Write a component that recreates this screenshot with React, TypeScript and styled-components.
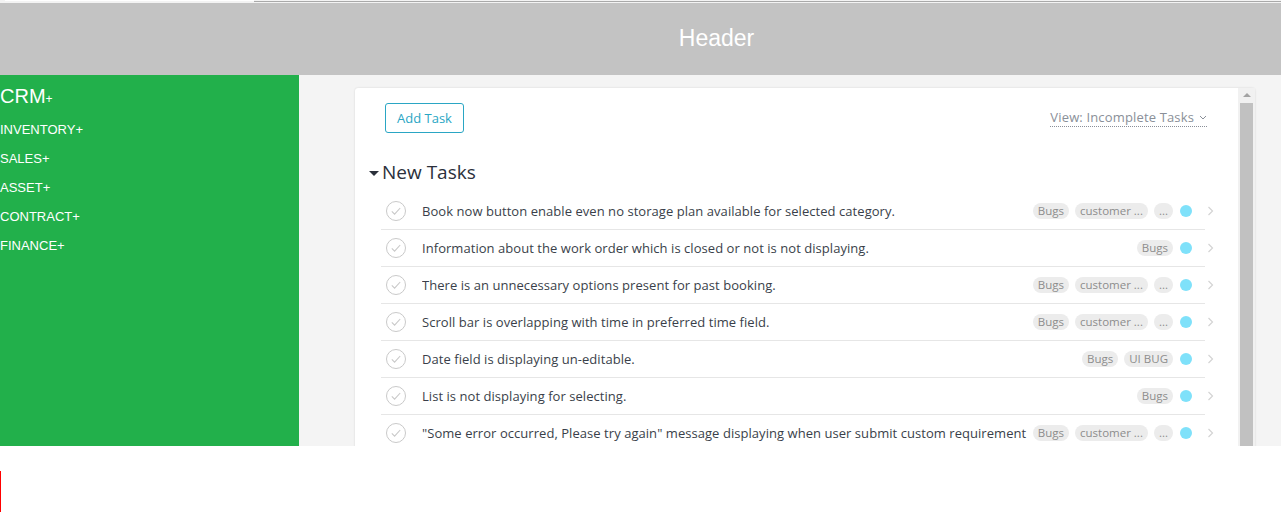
import React from "react";
import styled, { createGlobalStyle } from "styled-components";

const GlobalStyle = createGlobalStyle`
  body {
    margin: 0;
    background: #ffffff;
    font-family: "Open Sans", "Liberation Sans", sans-serif;
  }
`;

type Task = { title: string; tags: string[] };

const tasks: Task[] = [
  { title: "Book now button enable even no storage plan available for selected category.", tags: ["Bugs", "customer ...", "..."] },
  { title: "Information about the work order which is closed or not is not displaying.", tags: ["Bugs"] },
  { title: "There is an unnecessary options present for past booking.", tags: ["Bugs", "customer ...", "..."] },
  { title: "Scroll bar is overlapping with time in preferred time field.", tags: ["Bugs", "customer ...", "..."] },
  { title: "Date field is displaying un-editable.", tags: ["Bugs", "UI BUG"] },
  { title: "List is not displaying for selecting.", tags: ["Bugs"] },
  { title: "\"Some error occurred, Please try again\" message displaying when user submit custom requirement", tags: ["Bugs", "customer ...", "..."] },
];

const menu = ["INVENTORY", "SALES", "ASSET", "CONTRACT", "FINANCE"];

const CheckCircle = () => (
  <svg width="20" height="20" viewBox="0 0 20 20">
    <circle cx="10" cy="10" r="9.5" fill="none" stroke="#c9c9c9" strokeWidth="1" />
    <path d="M5.8 10.4l2.8 2.8 5.6-6.2" fill="none" stroke="#c9c9c9" strokeWidth="1.1" />
  </svg>
);

const Chevron = () => (
  <svg width="7" height="10" viewBox="0 0 7 10">
    <path d="M1.5 1l4 4-4 4" fill="none" stroke="#d4d4d4" strokeWidth="1.2" />
  </svg>
);

const App = () => {
  return (
    <>
      <GlobalStyle />
      <TopStrip>
        <StripLight />
        <StripDark />
      </TopStrip>
      <Header>Header</Header>
      <Layout>
        <Sidebar>
          <Brand>
            CRM<small>+</small>
          </Brand>
          {menu.map((m) => (
            <MenuItem key={m}>
              {m}
              <span>+</span>
            </MenuItem>
          ))}
        </Sidebar>
        <Main>
          <Card>
            <CardBody>
              <Toolbar>
                <AddButton>Add Task</AddButton>
                <ViewLink>
                  View: Incomplete Tasks
                  <svg width="8" height="5" viewBox="0 0 8 5">
                    <path d="M1 1l3 3 3-3" fill="none" stroke="#8a8f98" strokeWidth="1" />
                  </svg>
                </ViewLink>
              </Toolbar>
              <SectionTitle>
                <Caret />
                New Tasks
              </SectionTitle>
              <TaskList>
                {tasks.map((t, i) => (
                  <TaskRow key={i}>
                    <CheckCircle />
                    <TaskTitle>{t.title}</TaskTitle>
                    <Tags>
                      {t.tags.map((tag, j) => (
                        <Tag key={j}>{tag}</Tag>
                      ))}
                      <Dot />
                    </Tags>
                    <ChevronBox>
                      <Chevron />
                    </ChevronBox>
                  </TaskRow>
                ))}
              </TaskList>
            </CardBody>
            <ScrollBar>
              <ScrollArrow />
              <ScrollThumb />
            </ScrollBar>
          </Card>
        </Main>
      </Layout>
      <Footer />
    </>
  );
};

const TopStrip = styled.div`
  height: 3px;
  background: #f3f3f3;
  display: flex;
`;

const StripLight = styled.div`
  width: 249px;
  height: 1px;
  margin-left: 5px;
  background: #ffffff;
`;

const StripDark = styled.div`
  flex: 1;
  height: 1px;
  margin-top: 1px;
  background: #a9a9a9;
`;

const Header = styled.div`
  height: 72px;
  background: #c3c3c3;
  color: #ffffff;
  font-family: "Liberation Sans", Arial, sans-serif;
  font-size: 23px;
  line-height: 70px;
  text-align: center;
  padding-left: 152px;
`;

const Layout = styled.div`
  display: flex;
  height: 371px;
  overflow: hidden;
`;

const Sidebar = styled.div`
  width: 299px;
  flex-shrink: 0;
  background: #22b04b;
  color: #ffffff;
  font-family: "Liberation Sans", Arial, sans-serif;
  padding-top: 9px;
`;

const Brand = styled.div`
  font-size: 20px;
  line-height: 24px;
  margin-bottom: 4px;
  small {
    font-size: 12px;
  }
`;

const MenuItem = styled.div`
  font-size: 13px;
  line-height: 29px;
`;

const Main = styled.div`
  flex: 1;
  background: #f4f4f4;
  padding: 13px 26px 0 56px;
`;

const Card = styled.div`
  background: #ffffff;
  display: flex;
  height: 420px;
  border-radius: 3px 3px 0 0;
  box-shadow: 0 0 2px rgba(0, 0, 0, 0.15);
`;

const CardBody = styled.div`
  flex: 1;
  min-width: 0;
  padding: 15px 33px 0 14px;
`;

const Toolbar = styled.div`
  display: flex;
  justify-content: space-between;
  align-items: center;
  padding-left: 16px;
  margin-right: -2px;
`;

const AddButton = styled.button`
  height: 30px;
  padding: 0 11px;
  border: 1px solid #2aa6c4;
  border-radius: 3px;
  background: #ffffff;
  color: #2aa6c4;
  font-family: "Open Sans", sans-serif;
  font-size: 13px;
`;

const ViewLink = styled.div`
  display: flex;
  align-items: center;
  gap: 5px;
  color: #8a8f98;
  font-size: 13px;
  letter-spacing: 0.15px;
  border-bottom: 1px dotted #8a8f98;
  line-height: 17px;
`;

const SectionTitle = styled.div`
  display: flex;
  align-items: center;
  gap: 3px;
  margin-top: 27px;
  font-size: 19px;
  color: #2b303b;
  line-height: 24px;
`;

const Caret = styled.span`
  width: 0;
  height: 0;
  border-left: 5px solid transparent;
  border-right: 5px solid transparent;
  border-top: 5px solid #2b303b;
  margin-top: 2px;
`;

const TaskList = styled.div`
  margin: 9px 0 0 12px;
`;

const TaskRow = styled.div`
  display: flex;
  align-items: center;
  height: 36px;
  border-bottom: 1px solid #e6e6e6;
  padding-left: 5px;
`;

const TaskTitle = styled.div`
  flex: 1;
  min-width: 0;
  margin: 0 6px 0 16px;
  font-size: 13px;
  letter-spacing: 0.05px;
  color: #3a3f4a;
  white-space: nowrap;
  overflow: hidden;
`;

const Tags = styled.div`
  display: flex;
  flex-shrink: 0;
  align-items: center;
  gap: 6px;
`;

const Tag = styled.span`
  background: #ececec;
  color: #8c8c8c;
  font-size: 11.5px;
  line-height: 16px;
  padding: 0 5px;
  border-radius: 8px;
  white-space: nowrap;
`;

const Dot = styled.span`
  width: 12px;
  height: 12px;
  border-radius: 50%;
  background: #7fe1fa;
  margin: 0 7px 0 1px;
`;

const ChevronBox = styled.div`
  display: flex;
  flex-shrink: 0;
  margin-right: -14px;
  margin-left: 8px;
  width: 12px;
`;

const ScrollBar = styled.div`
  width: 17px;
  display: flex;
  flex-direction: column;
  align-items: center;
  background: #f1f1f1;
`;

const ScrollArrow = styled.div`
  width: 0;
  height: 0;
  margin: 5px 0 6px;
  border-left: 4px solid transparent;
  border-right: 4px solid transparent;
  border-bottom: 4px solid #a3a3a3;
`;

const ScrollThumb = styled.div`
  width: 13px;
  flex: 1;
  background: #c1c1c1;
`;

const Footer = styled.div`
  margin-top: 25px;
  height: 41px;
  border-left: 1px solid #ff0000;
`;

export default App;
